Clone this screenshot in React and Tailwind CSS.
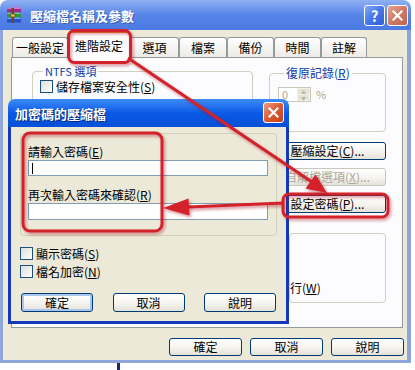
import clsx from "clsx";

const K = ({ c }) => (
  <>
    (<span className="underline">{c}</span>)
  </>
);

function XpButton({ children, className, def, disabled }) {
  return (
    <div
      className={clsx(
        "flex items-center justify-center rounded-[3px] border bg-linear-to-b from-white via-[#f6f5f0] to-[#e4e2d8] text-[12px] leading-none",
        def && "shadow-[inset_0_0_0_2px_#a9c5f0]",
        disabled ? "border-[#c9c7ba] text-[#aca899]" : "border-[#003c74] text-black",
        className
      )}
    >
      {children}
    </div>
  );
}

function Check({ children }) {
  return (
    <div className="flex h-[13px] items-center gap-[3px] text-[12px] leading-none">
      <span className="h-[13px] w-[13px] shrink-0 border border-[#1c5180] bg-linear-to-br from-[#dcdcd7] to-white" />
      <span>{children}</span>
    </div>
  );
}

function Tab({ label, w, active }) {
  return (
    <div
      className={clsx(
        "flex shrink-0 items-center justify-center rounded-t-[3px] border border-b-0 text-[12px] leading-none",
        active
          ? "relative z-10 -mb-px h-[26px] border-[#919b9c] border-t-[#e68b2c] bg-[#fcfcfe]"
          : "h-[20px] border-[#919b9c] bg-linear-to-b from-white to-[#ecebe6]",
        w
      )}
    >
      {label}
    </div>
  );
}

function CloseX({ size = 11 }) {
  return (
    <svg width={size} height={size} viewBox="0 0 11 11">
      <path d="M1.5 1.5 L9.5 9.5 M9.5 1.5 L1.5 9.5" stroke="white" strokeWidth="2.2" strokeLinecap="square" />
    </svg>
  );
}

function RarIcon() {
  return (
    <svg width="18" height="18" viewBox="0 0 18 18">
      <path d="M2 2 L14 1 L16 3 L4 4 Z" fill="#e070c8" />
      <rect x="2" y="3" width="14" height="3.5" fill="#9a2a8c" />
      <path d="M2 7 L14 6.5 L16 8 L4 8.5 Z" fill="#6fd07a" />
      <rect x="2" y="8" width="14" height="3.5" fill="#2b9a3d" />
      <path d="M2 12 L14 11.5 L16 13 L4 13.5 Z" fill="#7aa6f5" />
      <rect x="2" y="13" width="14" height="3.5" fill="#2450c8" />
      <rect x="6.5" y="2" width="2.5" height="15" fill="#6a4a22" />
      <rect x="5.5" y="8" width="4.5" height="3" fill="#d8c070" stroke="#5a3a10" strokeWidth="0.6" />
    </svg>
  );
}

function Annotations() {
  const red = "#d3202a";
  return (
    <svg className="pointer-events-none absolute inset-0 z-30" width="415" height="370" viewBox="0 0 415 370">
      <defs>
        <filter id="sh" x="-20%" y="-20%" width="140%" height="140%">
          <feDropShadow dx="1.5" dy="2" stdDeviation="1.5" floodColor="#a01018" floodOpacity="0.45" />
        </filter>
      </defs>
      <g filter="url(#sh)" fill="none" stroke={red} strokeWidth="3">
        <rect x="68.5" y="30.5" width="62" height="32" rx="6" />
        <rect x="23" y="133" width="139" height="98" rx="7" />
        <rect x="283" y="194" width="105" height="23" rx="6" />
        <line x1="128" y1="58" x2="312" y2="182" />
        <line x1="284" y1="203" x2="188" y2="207" />
      </g>
      <g filter="url(#sh)" fill={red}>
        <polygon points="327,193 305.5,188.5 315.5,174.5" />
        <polygon points="163,208 189.5,215.5 188.5,198.5" />
      </g>
    </svg>
  );
}

function PasswordDialog() {
  return (
    <div className="absolute left-[8px] top-[99px] z-20 flex h-[225px] w-[281px] flex-col">
      <div className="relative flex h-[28px] shrink-0 items-center rounded-t-[7px] bg-linear-to-b from-[#3d8bf7] via-[#0a5ae6] to-[#0650d8] pl-[7px]">
        <span className="text-[13px] font-bold leading-none text-white [text-shadow:1px_1px_0_#0a246a]">
          加密碼的壓縮檔
        </span>
        <div className="absolute right-[5px] top-[3px] flex h-[21px] w-[21px] items-center justify-center rounded-[3px] border border-white bg-linear-to-br from-[#ef9a7c] via-[#db5a34] to-[#c2401a]">
          <CloseX />
        </div>
      </div>
      <div className="flex flex-1 flex-col border-x-[3px] border-b-[3px] border-[#1239b8] bg-[#ece9d8] px-[9px] pt-[6px]">
        <div className="h-[103px] w-[257px] rounded-[4px] border border-[#d0d0bf] pl-[7px] pt-[11px] text-[12px] leading-[14px]">
          <div>
            請輸入密碼<K c="E" />
          </div>
          <div className="mt-px flex h-[16px] w-[240px] items-center border border-[#7f9db9] bg-white pl-[3px]">
            <span className="h-[11px] w-px bg-black" />
          </div>
          <div className="mt-[12px]">
            再次輸入密碼來確認<K c="R" />
          </div>
          <div className="mt-px h-[17px] w-[240px] border border-[#7f9db9] bg-white" />
        </div>
        <div className="mt-[11px] flex flex-col gap-[5px]">
          <Check>
            顯示密碼<K c="S" />
          </Check>
          <Check>
            檔名加密<K c="N" />
          </Check>
        </div>
        <div className="mt-[15px] flex w-[256px] justify-between pl-px">
          <XpButton def className="h-[19px] w-[72px]">確定</XpButton>
          <XpButton className="h-[19px] w-[72px]">取消</XpButton>
          <XpButton className="h-[19px] w-[72px]">說明</XpButton>
        </div>
      </div>
    </div>
  );
}

export default function App() {
  const tabs = [
    ["一般設定", "w-[56px]"],
    ["進階設定", "w-[62px]", true],
    ["選項", "w-[49px]"],
    ["檔案", "w-[48px]"],
    ["備份", "w-[47px]"],
    ["時間", "w-[47px]"],
    ["註解", "w-[46px]"],
  ];
  return (
    <div className="relative h-[370px] w-[415px] overflow-hidden bg-white font-['Noto_Sans_CJK_TC','Noto_Sans_CJK_SC',sans-serif] text-black">
      <div className="flex h-[363px] w-[411px] flex-col">
        <div className="flex h-[30px] shrink-0 items-center rounded-t-[8px] bg-linear-to-b from-[#8fb0f2] via-[#5684e6] to-[#4a7ae2] pl-[5px] pr-[3px]">
          <RarIcon />
          <span className="ml-[7px] text-[13px] font-bold leading-none text-white [text-shadow:1px_1px_0_#3a5fb0]">
            壓縮檔名稱及參數
          </span>
          <div className="ml-auto flex gap-[2px]">
            <div className="flex h-[21px] w-[21px] items-center justify-center rounded-[3px] border border-white bg-linear-to-br from-[#7fa8f5] via-[#4677e6] to-[#2f5fd6] text-[15px] font-bold leading-none text-white">
              ?
            </div>
            <div className="flex h-[21px] w-[21px] items-center justify-center rounded-[3px] border border-white bg-linear-to-br from-[#e2a594] via-[#cf7a64] to-[#c0634d]">
              <CloseX />
            </div>
          </div>
        </div>
        <div className="flex flex-1 flex-col border-x-[3px] border-b-[3px] border-r-[4px] border-[#8fa6dc] bg-[#ece9d8]">
          <div className="flex h-[27px] items-end pl-[9px]">
            {tabs.map(([l, w, a]) => (
              <Tab key={l} label={l} w={w} active={a} />
            ))}
          </div>
          <div className="ml-[8px] flex h-[271px] w-[392px] gap-[16px] border border-[#919b9c] bg-[#fcfcfe] pl-[20px] pt-[8px]">
            <fieldset className="h-[90px] w-[221px] rounded-[4px] border border-[#d0d0bf] px-[7px]">
              <legend className="ml-[3px] px-[2px] text-[11px] leading-[11px] text-[#0b3ca8]">NTFS 選項</legend>
              <div className="mt-[3px] flex flex-col gap-[5px]">
                <Check>
                  儲存檔案安全性<K c="S" />
                </Check>
              </div>
            </fieldset>
            <div className="flex w-[117px] flex-col pt-px">
              <fieldset className="h-[65px] rounded-[4px] border border-[#d0d0bf] pl-[8px]">
                <legend className="ml-[6px] px-[2px] text-[12px] leading-[12px] text-[#0b3ca8]">
                  復原記錄<K c="R" />
                </legend>
                <div className="mt-[8px] flex items-center gap-[5px]">
                  <div className="flex h-[15px] w-[33px] items-center border border-[#c9c7ba] bg-white">
                    <span className="flex-1 pl-[3px] text-[11px] leading-none text-[#aca899]">0</span>
                    <div className="flex h-full w-[13px] flex-col gap-px bg-[#f2f1ea] p-px">
                      <span className="flex flex-1 items-center justify-center rounded-[1px] bg-[#e4e2d6] text-[5px] leading-none text-[#bbb8a8]">▲</span>
                      <span className="flex flex-1 items-center justify-center rounded-[1px] bg-[#e4e2d6] text-[5px] leading-none text-[#bbb8a8]">▼</span>
                    </div>
                  </div>
                  <span className="text-[11px] leading-none text-[#aca899]">%</span>
                </div>
              </fieldset>
              <XpButton className="mt-[10px] h-[18px]">
                壓縮設定<K c="C" />...
              </XpButton>
              <XpButton disabled className="mt-[8px] h-[18px]">
                自解檔選項<K c="X" />...
              </XpButton>
              <XpButton className="mt-[9px] h-[18px]">
                設定密碼<K c="P" />...
              </XpButton>
              <div className="ml-[20px] mt-[20px] flex h-[70px] flex-col justify-end rounded-[4px] border border-[#d0d0bf] pb-[7px] text-[12px] leading-[14px]">
                <span>
                  行<K c="W" />
                </span>
              </div>
            </div>
          </div>
          <div className="mt-[10px] flex justify-end gap-[8px] pr-[3px]">
            <XpButton className="h-[18px] w-[73px]">確定</XpButton>
            <XpButton className="h-[18px] w-[73px]">取消</XpButton>
            <XpButton className="h-[18px] w-[73px]">說明</XpButton>
          </div>
        </div>
      </div>
      <div className="absolute left-[117px] top-[363px] h-[7px] w-[3px] bg-[#1b2a6b]" />
      <PasswordDialog />
      <Annotations />
    </div>
  );
}
